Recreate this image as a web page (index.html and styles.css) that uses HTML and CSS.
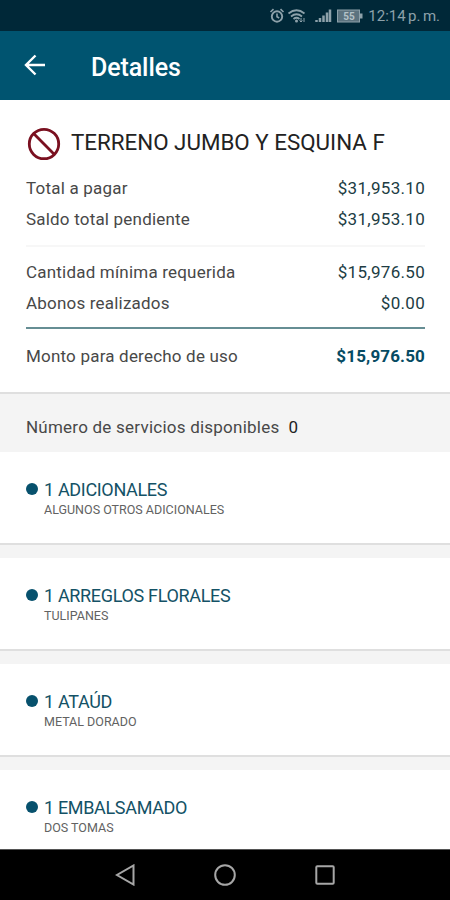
FILE: index.html
```html
<!DOCTYPE html>
<html lang="es">
<head>
<meta charset="utf-8">
<title>Detalles</title>
<link rel="stylesheet" href="styles.css">
</head>
<body>
<div class="statusbar">
  <svg class="status-icons" width="96" height="18" viewBox="0 0 96 18" fill="none" stroke="currentColor">
    <circle cx="8" cy="9.500" r="5.200" stroke-width="1.900"/>
    <path d="M8 6.500v3.300l2.200 1.200M1.500 5l3-2.800M14.500 5l-3-2.800" stroke-width="1.600"/>
    <path d="M19.500 6.500q8-6.500 16 0M22 9.500q5.500-4.500 11 0M24.500 12q3-2.500 6 0" stroke-width="1.700"/>
    <circle cx="27.500" cy="14" r="1.500" fill="currentColor" stroke="none"/>
    <path d="M32 11v4m-1.500-1.500l1.500 1.500 1.500-1.500M35 15v-4" stroke-width="1"/>
    <path d="M47.500 15v-2M51 15v-4M54.500 15V8.500M58 15V5.500M61 15V2.500" stroke-width="2.500"/>
    <rect x="68.500" y="3" width="22" height="12" fill="#5c737f" stroke-width="1"/>
    <rect x="91" y="6.500" width="2.500" height="5" fill="currentColor" stroke="none"/>
    <text class="battery" x="80" y="13" text-anchor="middle">55</text>
  </svg>
  <span class="clock">12:14 p. m.</span>
</div>
<header class="appbar">
  <svg class="back" width="22" height="22" viewBox="0 0 22 22" fill="none" stroke="#fff" stroke-width="2.400"><path d="M21 11H2.500M11.500 1.500L2 11l9.500 9.500"/></svg>
  <h1>Detalles</h1>
</header>
<main>
  <section class="summary">
    <div class="plot">
      <svg width="34" height="34" viewBox="0 0 34 34" fill="none" stroke="#7a1020" stroke-width="2.800"><circle cx="17" cy="17" r="14.700"/><path d="M6.600 6.600l20.800 20.800"/></svg>
      <h2>TERRENO JUMBO Y ESQUINA F</h2>
    </div>
    <div class="row"><span>Total a pagar</span><span class="amount">$31,953.10</span></div>
    <div class="row"><span>Saldo total pendiente</span><span class="amount">$31,953.10</span></div>
    <hr>
    <div class="row"><span>Cantidad mínima requerida</span><span class="amount">$15,976.50</span></div>
    <div class="row"><span>Abonos realizados</span><span class="amount">$0.00</span></div>
    <hr class="strong">
    <div class="row"><span>Monto para derecho de uso</span><span class="amount total">$15,976.50</span></div>
  </section>
  <div class="count"><span>Número de servicios disponibles</span><span class="num">0</span></div>
  <article class="card"><h3>1 ADICIONALES</h3><p>ALGUNOS OTROS ADICIONALES</p></article>
  <article class="card"><h3>1 ARREGLOS FLORALES</h3><p>TULIPANES</p></article>
  <article class="card"><h3>1 ATAÚD</h3><p>METAL DORADO</p></article>
  <article class="card"><h3>1 EMBALSAMADO</h3><p>DOS TOMAS</p></article>
</main>
<nav class="navbar">
  <svg width="20" height="22" viewBox="0 0 20 22"><path d="M18.500 1.500v19L2 11z"/></svg>
  <svg width="24" height="24" viewBox="0 0 24 24"><circle cx="12" cy="12" r="9.800"/></svg>
  <svg width="20" height="20" viewBox="0 0 20 20"><rect x="1.300" y="1.300" width="17.400" height="17.400" rx="1"/></svg>
</nav>
</body>
</html>
```
FILE: styles.css
```css
* { box-sizing: border-box; margin: 0; padding: 0; }
body {
  width: 450px;
  height: 900px;
  overflow: hidden;
  display: flex;
  flex-direction: column;
  background: #f4f4f4;
  font-family: Roboto, sans-serif;
  color: #484848;
}
svg { display: block; flex: none; }
.statusbar {
  height: 31px;
  flex: none;
  display: flex;
  align-items: center;
  justify-content: flex-end;
  padding: 1px 10px 0 0;
  background: #002838;
  color: #8da1aa;
}
.status-icons { margin-right: 3px; }
.battery { font-size: 10px; font-weight: 700; fill: #b4c2c8; stroke: none; }
.clock { font-size: 15px; white-space: nowrap; word-spacing: -1.3px; }
.appbar {
  height: 69px;
  flex: none;
  display: flex;
  align-items: center;
  padding-left: 24px;
  background: #005470;
  color: #fff;
}
.back { margin-top: -1px; }
.appbar h1 { margin: 3px 0 0 45px; font-size: 25px; font-weight: 500; letter-spacing: -.1px; }
main { flex: 1; min-height: 0; overflow: hidden; }
.summary {
  height: 294px;
  padding: 26px 25px 0 26px;
  background: #fff;
  border-bottom: 2px solid #dfdfdf;
}
.plot { display: flex; height: 46px; }
.plot svg { margin: 1px 0 0 1px; }
.plot h2 { margin: 0 0 0 10px; font-size: 22.35px; line-height: 32px; font-weight: 400; color: #222; white-space: nowrap; }
.row { height: 31.5px; display: flex; align-items: center; justify-content: space-between; font-size: 17px; letter-spacing: .2px; }
.amount { color: #203c43; letter-spacing: .3px; }
.total { color: #064b63; font-weight: 700; letter-spacing: .15px; }
hr { border: 0; height: 2px; margin: 10px 0 9px; background: #f7f7f7; }
hr.strong { margin: 8px 0 11px; background: #668e94; }
.count { height: 58px; padding: 8px 26px 0; display: flex; align-items: center; font-size: 17px; letter-spacing: .23px; }
.num { margin-left: 9px; color: #222; }
.card {
  position: relative;
  height: 93px;
  margin-bottom: 13.1px;
  padding: 27px 0 0 44px;
  background: #fff;
  border-bottom: 2px solid #dfdfdf;
}
.card::before {
  content: "";
  position: absolute;
  left: 26px;
  top: 31px;
  width: 12px;
  height: 12px;
  border-radius: 50%;
  background: #07516d;
}
.card h3 { font-size: 18px; line-height: 22px; font-weight: 400; letter-spacing: -.33px; color: #145266; }
.card p { font-size: 12.5px; line-height: 18px; color: #626262; }
.navbar {
  height: 51px;
  flex: none;
  display: flex;
  align-items: center;
  justify-content: center;
  gap: 78px;
  background: #000;
  border-top: 1px solid #555;
}
.navbar svg { fill: none; stroke: #a6a6a6; stroke-width: 2; }
```
